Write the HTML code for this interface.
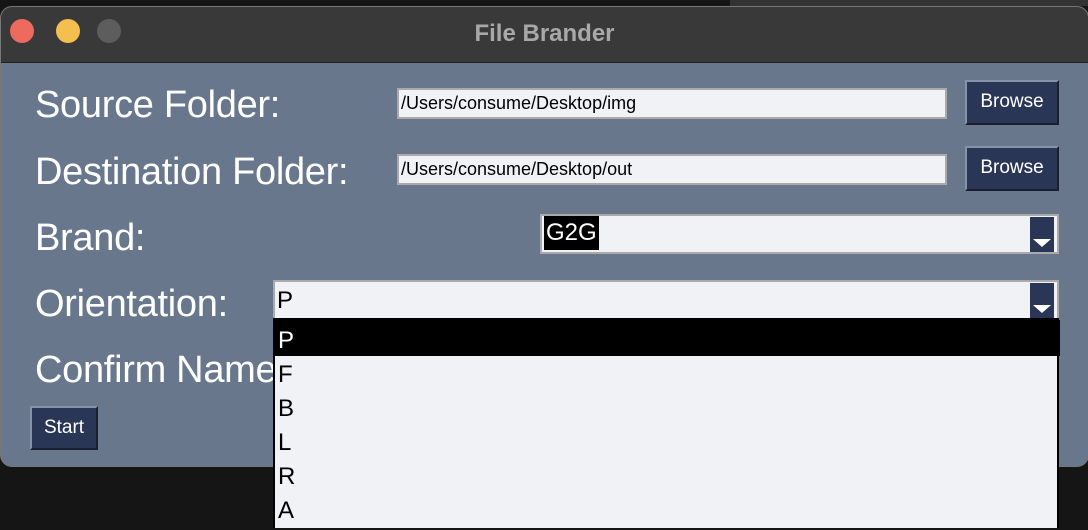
<!DOCTYPE html><html><head><style>
body{margin:0;width:1088px;height:528px;background:#151515;position:relative;overflow:hidden;font-family:"Liberation Sans",sans-serif}
.a{position:absolute}
.win{left:0;top:6px;width:1087px;height:459px;border-radius:12px;background:#68778c;overflow:hidden;border:1px solid #777}
.tb{left:0;top:0;width:100%;height:55px;background:#393939;border-bottom:1px solid #222}
.lbl{color:#fff;font-size:38px;left:35px;letter-spacing:-0.3px}
.in{background:#f1f2f6;border:2px solid #aaa;color:#000;font-size:18px;line-height:24px;padding-left:2px;box-sizing:border-box}
.btn{background:#2a3656;border:2px solid #8792a8;border-right-color:#1a1f30;border-bottom-color:#1a1f30;color:#fff;font-size:19px;text-align:center;box-sizing:border-box}
.arr{background:#2a3656;width:24px;height:35px}
.arr:after{content:"";position:absolute;left:3px;top:22px;border-left:9px solid transparent;border-right:9px solid transparent;border-top:8px solid #fff}
.it{left:0;width:100%;height:34px;font-size:24px;line-height:38px;padding-left:3px;color:#000}
</style></head><body>
<div class="a" style="left:730px;top:0;width:358px;height:6px;background:#333"></div>
<div class="a win">
<div class="a tb"></div>
<div class="a" style="left:9px;top:12px;width:24px;height:24px;border-radius:50%;background:#ec6a5e"></div>
<div class="a" style="left:55px;top:12px;width:24px;height:24px;border-radius:50%;background:#f4bf4f"></div>
<div class="a" style="left:96px;top:12px;width:24px;height:24px;border-radius:50%;background:#5d5d5d"></div>
<div class="a" style="left:0;width:100%;top:13px;text-align:center;color:#a8a8a8;font-weight:bold;font-size:24px">File Brander</div>
</div>
<div class="a lbl" style="top:84px">Source Folder:</div>
<div class="a lbl" style="top:151px">Destination Folder:</div>
<div class="a lbl" style="top:217px">Brand:</div>
<div class="a lbl" style="top:283px">Orientation:</div>
<div class="a lbl" style="top:349px">Confirm Name</div>
<div class="a in" style="left:397px;top:88px;width:550px;height:31px;line-height:27px">/Users/consume/Desktop/img</div>
<div class="a in" style="left:397px;top:154px;width:550px;height:31px;line-height:27px">/Users/consume/Desktop/out</div>
<div class="a btn" style="left:965px;top:80px;width:94px;height:45px;line-height:40px">Browse</div>
<div class="a btn" style="left:965px;top:146px;width:94px;height:45px;line-height:40px">Browse</div>
<div class="a in" style="left:540px;top:214px;width:519px;height:40px"><span style="background:#000;color:#fff;font-size:24px;line-height:34px;display:inline-block;padding:0 2px">G2G</span></div>
<div class="a arr" style="left:1030px;top:217px"></div>
<div class="a in" style="left:273px;top:280px;width:786px;height:40px;font-size:24px;line-height:38px">P</div>
<div class="a arr" style="left:1030px;top:283px"></div>
<div class="a btn" style="left:30px;top:406px;width:68px;height:44px;line-height:40px">Start</div>
<div class="a" style="left:273px;top:318px;width:786px;height:210px;background:#f1f2f6;border:2px solid #000;box-sizing:border-box;border-bottom:none">
<div class="a it" style="top:0;background:#000;height:36px"></div>
<div class="a it" style="top:2px;color:#fff">P</div>
<div class="a it" style="top:36px">F</div>
<div class="a it" style="top:70px">B</div>
<div class="a it" style="top:104px">L</div>
<div class="a it" style="top:138px">R</div>
<div class="a it" style="top:172px">A</div>
</div>
</body></html>
